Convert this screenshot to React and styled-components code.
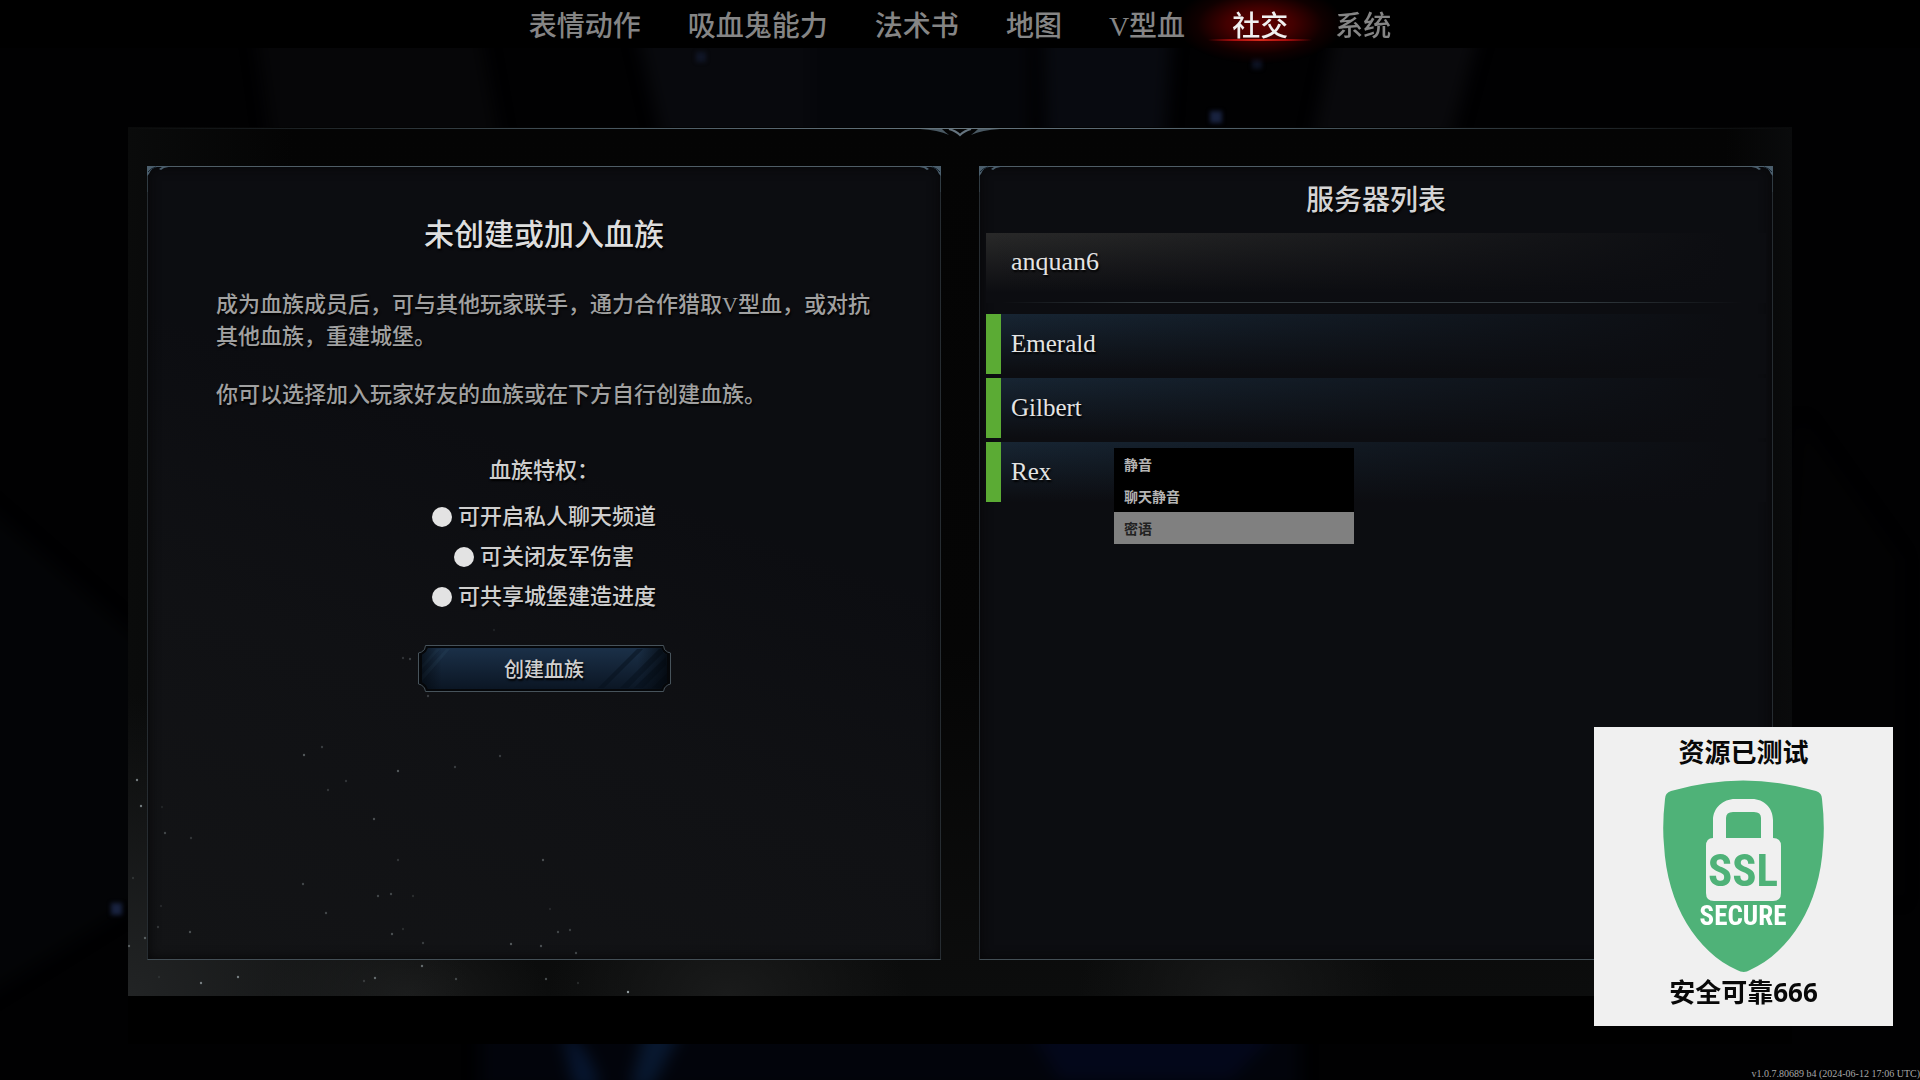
import React, { useState } from "react";
import styled, { createGlobalStyle } from "styled-components";

const navItems = ["表情动作", "吸血鬼能力", "法术书", "地图", "V型血", "社交", "系统"];
const privileges = ["可开启私人聊天频道", "可关闭友军伤害", "可共享城堡建造进度"];
const players = ["Emerald", "Gilbert", "Rex"];
const menuItems = ["静音", "聊天静音", "密语"];

// x, y, opacity
const dust = [
    [9, 653, 0.6], [13, 679, 0.6], [5, 751, 0.15], [1, 819, 0.4], [17, 811, 0.4],
    [73, 856, 0.6], [110, 850, 0.6], [247, 851, 0.5], [294, 839, 0.5], [328, 852, 0.3],
    [418, 852, 0.35], [500, 865, 0.8], [236, 854, 0.2], [450, 856, 0.15], [31, 850, 0.1],
    [176, 628, 0.4], [194, 620, 0.25], [270, 644, 0.4], [327, 640, 0.25], [372, 629, 0.25],
    [218, 654, 0.2], [200, 663, 0.2], [246, 692, 0.35], [37, 706, 0.3], [63, 711, 0.2],
    [34, 680, 0.1], [415, 733, 0.35], [270, 733, 0.2], [175, 757, 0.3], [250, 769, 0.3],
    [263, 767, 0.3], [285, 769, 0.15], [198, 786, 0.3], [62, 805, 0.35], [30, 800, 0.2],
    [264, 807, 0.35], [275, 802, 0.15], [295, 816, 0.25], [383, 817, 0.4], [413, 819, 0.35],
    [430, 805, 0.3], [442, 803, 0.25], [448, 826, 0.3], [422, 782, 0.12], [33, 779, 0.12],
    [275, 531, 0.2], [282, 532, 0.25], [300, 569, 0.25], [366, 503, 0.1],
];

const Corner = ({ right }) => (
    <CornerSvg $right={right} viewBox="0 0 26 26" aria-hidden="true">
        <path d="M0 0H26L17 2L14 4L12 3L15 1H10Q4 2 2 8L0 10Z" fill="#4b5e6c" />
        <path d="M1 6Q4 2 9 1" fill="none" stroke="#14212b" />
        <path d="M0 0V26" stroke="#4b5e6c" opacity="0.6" />
    </CornerSvg>
);

const Scene = () => (
    <SceneSvg viewBox="0 0 1920 1080" preserveAspectRatio="xMidYMid slice" aria-hidden="true">
        <defs>
            <filter id="soft" colorInterpolationFilters="sRGB"><feGaussianBlur stdDeviation="8" /></filter>
            <filter id="tight" colorInterpolationFilters="sRGB"><feGaussianBlur stdDeviation="2" /></filter>
        </defs>
        <g filter="url(#soft)">
            <path d="M255 30H480L500 140H270Z" fill="#060608" />
            <path d="M636 30H810V140H662Z" fill="#08090d" />
            <path d="M810 30H1030V140H810Z" fill="#05060a" />
            <path d="M1042 30H1172L1165 140H1046Z" fill="#080a10" />
            <path d="M1335 30H1480L1450 140H1312Z" fill="#09090c" />
            <path d="M-20 500L140 640V900L-20 1000Z" fill="#030406" />
            <path d="M1800 420L1900 560V900L1780 800Z" fill="#020203" />
            <path d="M480 1030H1300V1090H480Z" fill="#02040b" />
            <path d="M562 1030Q590 1045 600 1090H575Z" fill="#071630" />
            <path d="M645 1030H682L650 1090H630Z" fill="#081830" />
            <path d="M1030 1030H1280L1230 1080H1060Z" fill="#03071a" />
        </g>
        <g filter="url(#tight)" fill="#18223f">
            <rect x="1210" y="111" width="12" height="12" />
            <rect x="111" y="903" width="11" height="12" />
            <rect x="1252" y="59" width="10" height="10" opacity="0.5" />
            <rect x="696" y="52" width="10" height="10" opacity="0.5" />
        </g>
    </SceneSvg>
);

const ShieldLogo = () => (
    <svg width="161" height="192" viewBox="0 0 161 192" role="img" aria-label="SSL SECURE">
        <path
            d="M8 11Q80 -10 153 11Q159 13 159 19Q162 45 160 65C157 125 127 172 87 190Q81 194 74 190C34 172 4 125 1 65Q-1 45 2 19Q2 13 8 11Z"
            fill="#4fb278"
        />
        <path
            d="M50 58V40C50 28 60 19 72 19H89C101 19 110 28 110 40V58Q118 58 118 66V113Q118 121 110 121H51Q43 121 43 113V66Q43 58 50 58ZM63 58H98V38Q98 32 91 32H70Q63 32 63 38Z"
            fill="#f0f0f0"
            fillRule="evenodd"
        />
        <LogoText x="80" y="106" fontSize="45" fill="#4fb278">SSL</LogoText>
        <LogoText x="80" y="145" fontSize="27" fill="#fff">SECURE</LogoText>
    </svg>
);

const CreateButton = () => (
    <CreateClan type="button">
        <svg viewBox="0 0 253 47" preserveAspectRatio="none" aria-hidden="true">
            <defs>
                <linearGradient id="steel" x1="0" y1="0" x2="0" y2="1">
                    <stop offset="0" stopColor="#1b3048" />
                    <stop offset="1" stopColor="#0b1624" />
                </linearGradient>
                <linearGradient id="edge" x1="0" y1="0" x2="1" y2="0">
                    <stop offset="0" stopColor="#02060b" stopOpacity="0.6" />
                    <stop offset="0.08" stopColor="#02060b" stopOpacity="0" />
                    <stop offset="0.88" stopColor="#02060b" stopOpacity="0" />
                    <stop offset="1" stopColor="#02060b" stopOpacity="0.8" />
                </linearGradient>
            </defs>
            <path
                d="M7.5 .5H245.5L246.5 4.5L249.5 7L252.5 8V39L249.5 40L246.5 43L245.5 46.5H7.5L6.5 43L3.5 40L.5 39V8L3.5 7L6.5 4.5Z"
                fill="#05070a"
                stroke="#47535b"
            />
            <path d="M10 3H243L245 7L249 10V37L245 40L243 44H10L8 40L4 37V10L8 7Z" fill="url(#steel)" />
            <path d="M180 43L219 4H225L186 43ZM202 43L241 4H244L245 8L210 43ZM216 43L248 12V20L225 43ZM234 43L249 28V36L245 39L243 43Z" fill="#06101c" opacity="0.5" />
            <path d="M4 30L28 4H32L4 36ZM4 20L18 4H22L4 24Z" fill="#29415a" opacity="0.35" />
            <path d="M10 3H243L245 7L249 10V37L245 40L243 44H10L8 40L4 37V10L8 7Z" fill="url(#edge)" />
        </svg>
        <span>创建血族</span>
    </CreateClan>
);

const App = () => {
    const [tab, setTab] = useState("社交");
    const [option, setOption] = useState("密语");

    const change_tab = (e, name) => {
        e.preventDefault();
        setTab(name);
    }

    return (
        <Page>
            <GlobalStyle />
            <Scene />
            <TopBar>
                <Nav>
                    {navItems.map((name) => (
                        <NavLink key={name} href="#" $active={name === tab} onClick={(e) => { change_tab(e, name) }}>
                            <span>{name}</span>
                        </NavLink>
                    ))}
                </Nav>
            </TopBar>
            <Frame>
                <Crest viewBox="0 0 80 10" aria-hidden="true">
                    <path d="M0 1H22Q25 4 29 7Q18 2 0 1ZM80 1H58Q55 4 51 7Q62 2 80 1Z" fill="#4b5a64" />
                    <path d="M29 1Q36 3 40 7Q44 3 51 1" fill="none" stroke="#65747f" strokeWidth="2" />
                </Crest>
                <ClanPanel>
                    <Corner />
                    <Corner right />
                    <ClanTitle>未创建或加入血族</ClanTitle>
                    <ClanText>成为血族成员后，可与其他玩家联手，通力合作猎取V型血，或对抗其他血族，重建城堡。</ClanText>
                    <ClanText>你可以选择加入玩家好友的血族或在下方自行创建血族。</ClanText>
                    <PrivilegeTitle>血族特权：</PrivilegeTitle>
                    <PrivilegeList>
                        {privileges.map((text) => (
                            <Privilege key={text}>{text}</Privilege>
                        ))}
                    </PrivilegeList>
                    <CreateButton />
                </ClanPanel>
                <ServerPanel>
                    <Corner />
                    <Corner right />
                    <ServerTitle>服务器列表</ServerTitle>
                    <HostRow>anquan6</HostRow>
                    <PlayerList>
                        {players.map((name) => (
                            <PlayerRow key={name}>
                                <span>{name}</span>
                                {name === "Rex" && (
                                    <ContextMenu>
                                        {menuItems.map((item) => (
                                            <MenuButton
                                                key={item}
                                                type="button"
                                                $selected={item === option}
                                                onMouseEnter={() => { setOption(item) }}
                                            >
                                                {item}
                                            </MenuButton>
                                        ))}
                                    </ContextMenu>
                                )}
                            </PlayerRow>
                        ))}
                    </PlayerList>
                </ServerPanel>
                <DustSvg viewBox="0 0 1664 869" preserveAspectRatio="xMinYMax meet" aria-hidden="true">
                    {dust.map(([x, y, o]) => (
                        <circle key={x + "-" + y} cx={x} cy={y} r="1.2" fill="#b4c0c4" opacity={o} />
                    ))}
                </DustSvg>
            </Frame>
            <Shelf />
            <Footer>v1.0.7.80689 b4 (2024-06-12 17:06 UTC)</Footer>
            <SafeCard>
                <span>资源已测试</span>
                <ShieldLogo />
                <span>安全可靠666</span>
            </SafeCard>
        </Page>
    );
}

export default App;

const GlobalStyle = createGlobalStyle`
    * {
        box-sizing: border-box;
    }
    body {
        margin: 0;
        background: #010102;
        font-family: "Liberation Serif", "Noto Sans CJK SC", serif;
    }
    h1, h2, h3, p, ul {
        margin: 0;
        padding: 0;
        font-weight: 500;
        list-style: none;
    }
    button {
        padding: 0;
        border: 0;
        font-family: inherit;
        cursor: pointer;
    }
`;

const Page = styled.div`
    position: relative;
    display: flex;
    flex-direction: column;
    min-height: 100vh;
    overflow: hidden;
`;

const SceneSvg = styled.svg`
    position: absolute;
    inset: 0;
    width: 100%;
    height: 100%;
`;

const TopBar = styled.header`
    position: relative;
    z-index: 1;
    height: 48px;
    background: #000;
`;

const Nav = styled.nav`
    display: flex;
    justify-content: center;
    gap: 47px;
    height: 100%;
`;

const NavLink = styled.a`
    position: relative;
    font-size: 28px;
    font-weight: 500;
    line-height: 53px;
    white-space: nowrap;
    text-decoration: none;
    color: ${props => props.$active ? "#f0f0f0" : "#858585"};

    span {
        position: relative;
    }
    &::before {
        content: "";
        display: ${props => props.$active ? "block" : "none"};
        position: absolute;
        inset: -16px -56px;
        background: radial-gradient(closest-side, #620000, #420000 40%, #1a000099 75%, transparent);
    }
    &::after {
        content: "";
        display: ${props => props.$active ? "block" : "none"};
        position: absolute;
        top: 39px;
        left: -24px;
        right: -24px;
        height: 2px;
        background: linear-gradient(90deg, transparent, #a80d0d 25%, #d42a1c 50%, #a80d0d 75%, transparent);
    }
`;

const Frame = styled.main`
    position: relative;
    flex: 1;
    display: grid;
    grid-template-columns: 1fr 1fr;
    gap: 38px;
    margin: 79px 128px 0;
    padding: 39px 19px 36px;
    background:
        linear-gradient(90deg, transparent, #4a5962 30%, #66757f 50%, #4a5962 70%, transparent) 0 1px / 100% 1px no-repeat,
        radial-gradient(ellipse 340px 300px at 0 100%, #222425, transparent),
        radial-gradient(ellipse 140px 80px at 280px 100%, #1a1b1b, transparent),
        radial-gradient(ellipse 180px 120px at 600px 100%, #1a1b1b, transparent),
        radial-gradient(ellipse 160px 120px at 1110px 100%, #181919, transparent),
        linear-gradient(90deg, #0a0b0b, transparent 10%, transparent 96%, #0a0b0c),
        linear-gradient(#040404, #050505 60%, #0c0d0d);
`;

const Crest = styled.svg`
    position: absolute;
    top: 1px;
    left: calc(50% - 40px);
    width: 80px;
    height: 10px;
`;

const DustSvg = styled.svg`
    position: absolute;
    inset: 0;
    width: 100%;
    height: 100%;
    pointer-events: none;
`;

const CornerSvg = styled.svg`
    position: absolute;
    top: -1px;
    ${props => props.$right ? "right: -1px;" : "left: -1px;"}
    width: 26px;
    height: 26px;
    transform: ${props => props.$right ? "scaleX(-1)" : "none"};
`;

const Panel = styled.section`
    position: relative;
    display: flex;
    flex-direction: column;
    border: 1px solid #262c31;
    border-top-color: #4f5d66;
    border-bottom-color: #434e55;
    background: #0c0d11;
    box-shadow: inset 0 0 12px #060607;
    text-shadow: 1px 2px 2px #000;
`;

const ClanPanel = styled(Panel)`
    align-items: center;
    padding: 48px 68px;
    background: linear-gradient(20deg, #131416, #101114 35%, #0c0d11 60%);
`;

const ServerPanel = styled(Panel)`
    padding: 14px 6px;
`;

const ClanTitle = styled.h1`
    margin-bottom: 8px;
    font-size: 30px;
    line-height: 40px;
    color: #dedede;
`;

const ClanText = styled.p`
    align-self: stretch;
    margin-top: 26px;
    font-size: 22px;
    line-height: 32px;
    color: #a0a0a0;
`;

const PrivilegeTitle = styled.h3`
    margin: 44px 0 10px;
    font-size: 22px;
    line-height: 32px;
    color: #cecece;
`;

const PrivilegeList = styled.ul`
    margin-bottom: 28px;
`;

const Privilege = styled.li`
    display: flex;
    justify-content: center;
    align-items: center;
    gap: 6px;
    font-size: 22px;
    font-weight: 500;
    line-height: 40px;
    color: #cecece;

    &::before {
        content: "";
        width: 20px;
        height: 20px;
        border-radius: 50%;
        background: #e3e3e3;
    }
`;

const CreateClan = styled.button`
    display: grid;
    place-items: center;
    width: 253px;
    height: 47px;
    background: none;
    font-size: 20px;
    font-weight: 500;
    color: #cfcfcf;
    text-shadow: 1px 2px 2px #000;

    svg, span {
        grid-area: 1 / 1;
    }
    svg {
        width: 100%;
        height: 100%;
    }
    &:hover {
        color: #fff;
    }
`;

const ServerTitle = styled.h2`
    margin-bottom: 12px;
    font-size: 28px;
    line-height: 40px;
    text-align: center;
    color: #d4d4d4;
`;

const HostRow = styled.div`
    height: 70px;
    padding-left: 25px;
    font-size: 26px;
    line-height: 58px;
    color: #e4e4e4;
    background:
        linear-gradient(90deg, transparent 2%, #343d42 20%, #343d42 75%, transparent 97%) 0 100% / 100% 1px no-repeat,
        linear-gradient(90deg, transparent, #0c0d11 95%),
        linear-gradient(#292929, #0c0d11 85%);
`;

const PlayerList = styled.ul`
    display: flex;
    flex-direction: column;
    gap: 4px;
    margin-top: 11px;
`;

const PlayerRow = styled.li`
    position: relative;
    height: 60px;
    padding-left: 10px;
    border-left: 15px solid #5bab34;
    font-size: 25px;
    line-height: 60px;
    color: #e4e4e4;
    background:
        linear-gradient(90deg, transparent, #0c0d11 95%),
        linear-gradient(#172533, #0c0d11);
`;

const ContextMenu = styled.div`
    position: absolute;
    top: 6px;
    left: 113px;
    display: flex;
    flex-direction: column;
    width: 240px;
    background: #000;
`;

const MenuButton = styled.button`
    height: 32px;
    padding-left: 10px;
    font-size: 14px;
    font-weight: 700;
    text-align: left;
    color: ${props => props.$selected ? "#222" : "#b4b4b4"};
    background: ${props => props.$selected ? "#808080" : "#000"};
`;

const Shelf = styled.div`
    position: relative;
    height: 48px;
    margin: 0 128px;
    background: #000;
`;

const Footer = styled.footer`
    position: relative;
    height: 36px;
    font-size: 10px;
    line-height: 12px;
    padding-top: 24px;
    text-align: right;
    color: #a8a8a8;
`;

const SafeCard = styled.aside`
    position: absolute;
    right: 27px;
    bottom: 54px;
    display: flex;
    flex-direction: column;
    align-items: center;
    width: 299px;
    height: 299px;
    padding-top: 5px;
    background: #f0f0f0;
    font-family: "Noto Sans", "Noto Sans CJK SC", sans-serif;
    font-size: 26px;
    font-weight: 700;
    line-height: 40px;
    color: #080808;

    svg {
        margin-top: 8px;
    }
`;

const LogoText = styled.text`
    font-family: "Roboto Condensed", "Liberation Sans Narrow", Roboto, sans-serif;
    font-weight: 700;
    text-anchor: middle;
`;
